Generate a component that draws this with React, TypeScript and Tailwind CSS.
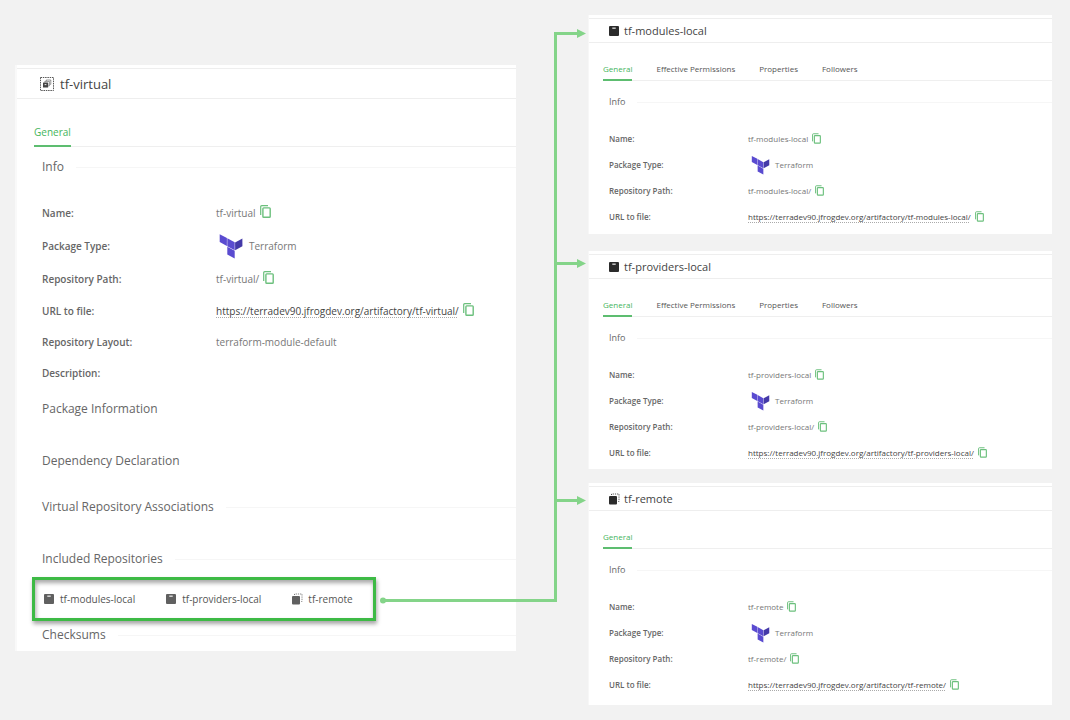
import type { ReactNode } from "react";
import clsx from "clsx";

type RepoKind = "local" | "remote" | "virtual";

type Repo = {
  name: string;
  kind: RepoKind;
  tabs: string[];
  className?: string;
};

const BASE_URL = "https://terradev90.jfrogdev.org/artifactory";

const LOCAL_TABS = ["General", "Effective Permissions", "Properties", "Followers"];

const REPOS: Repo[] = [
  { name: "tf-modules-local", kind: "local", tabs: LOCAL_TABS },
  {
    name: "tf-providers-local",
    kind: "local",
    tabs: LOCAL_TABS,
    className: "mt-[17px] pb-[3px]",
  },
  {
    name: "tf-remote",
    kind: "remote",
    tabs: ["General"],
    className: "mt-[14px] pb-[7px]",
  },
];

function RepoIcon({ kind, className }: { kind: RepoKind; className?: string }) {
  if (kind === "virtual") {
    return (
      <svg viewBox="0 0 14 14" className={className} aria-hidden="true">
        <rect
          x="0.5"
          y="0.5"
          width="13"
          height="13"
          fill="none"
          stroke="currentColor"
          strokeDasharray="1.5 0.8"
          strokeWidth="0.9"
        />
        <path
          d="M6.2 4V3h4.6v4.3H10M4.8 5.4V4.4h4.6v4.4h-1"
          fill="none"
          stroke="currentColor"
          strokeOpacity="0.7"
          strokeWidth="0.8"
        />
        <rect x="3" y="5.6" width="5.2" height="5" rx="0.5" fill="currentColor" />
        <rect x="4.6" y="7.2" width="1.8" height="0.9" fill="#fff" />
      </svg>
    );
  }

  if (kind === "remote") {
    return (
      <svg viewBox="0 0 12 12" className={className} aria-hidden="true">
        <path
          d="M3.5 2V1H11v7.5H9.5"
          fill="none"
          stroke="currentColor"
          strokeDasharray="1.2 1"
          strokeWidth="0.8"
        />
        <rect x="1" y="3" width="8" height="8.5" rx="1" fill="currentColor" />
      </svg>
    );
  }

  return (
    <svg viewBox="0 0 12 12" className={className} aria-hidden="true">
      <rect x="1" y="1" width="10" height="10" rx="1" fill="currentColor" />
      <rect x="4.3" y="2.6" width="3.4" height="1.1" fill="#fff" />
    </svg>
  );
}

function TerraformLogo({ className }: { className?: string }) {
  return (
    <svg viewBox="0 0 24 26" className={className} aria-hidden="true">
      <path d="M0.7 1.2l7.2 3.8v8l-7.2-4z" fill="#5a4bd0" />
      <path d="M8.3 5.3l7.4 4v8l-7.4-4z" fill="#5a4bd0" />
      <path d="M23.4 5.5l-7.3 3.9v7.8l7.3-3.9z" fill="#4439a8" />
      <path d="M8.3 13.8l7.4 4v7.7l-7.4-4z" fill="#5a4bd0" />
    </svg>
  );
}

function CopyButton({ label, large }: { label: string; large?: boolean }) {
  return (
    <button
      type="button"
      aria-label={`Copy ${label}`}
      className="mb-0.5 ml-1 shrink-0 text-[#6cc07d]"
    >
      <svg
        viewBox="0 0 11 13"
        fill="none"
        stroke="currentColor"
        className={large ? "h-[13px] w-[11px]" : "h-[11px] w-[9px]"}
      >
        <path d="M0.7 10V1.7q0-1 1-1H8" strokeWidth="1.2" />
        <rect x="2.9" y="2.9" width="7.3" height="9.3" rx="0.8" strokeWidth="1.4" />
      </svg>
    </button>
  );
}

function Tabs({ tabs, large }: { tabs: string[]; large?: boolean }) {
  return (
    <div
      role="tablist"
      className={clsx(
        "flex items-end border-b border-[#efefef]",
        large ? "ml-[17px] h-12 text-[10px]" : "ml-[14px] h-[38px] gap-6 text-[8px]"
      )}
    >
      {tabs.map((tab, index) => (
        <button
          key={tab}
          type="button"
          role="tab"
          aria-selected={index === 0}
          className={clsx(
            "-mb-px border-b-2",
            large ? "pb-[5px] leading-4" : "pb-1 leading-3",
            index === 0
              ? "border-[#5dbd70] text-[#45b55c]"
              : "border-transparent text-[#555]"
          )}
        >
          {tab}
        </button>
      ))}
    </div>
  );
}

function SectionTitle({
  children,
  large,
  rule = true,
}: {
  children: ReactNode;
  large?: boolean;
  rule?: boolean;
}) {
  return (
    <div className="flex items-center gap-3">
      <h3
        className={clsx(
          "shrink-0 text-[#666]",
          large ? "text-[12px] leading-4" : "text-[9px] leading-3"
        )}
      >
        {children}
      </h3>
      {rule && <div className="h-px flex-1 bg-[#f6f6f6]" />}
    </div>
  );
}

function Field({
  label,
  children,
  large,
  className,
}: {
  label: string;
  children?: ReactNode;
  large?: boolean;
  className: string;
}) {
  return (
    <div className={clsx("flex items-center", className)}>
      <dt
        className={clsx(
          "shrink-0 font-semibold text-[#666]",
          large ? "w-[174px]" : "w-[139px]"
        )}
      >
        {label}:
      </dt>
      <dd className="flex items-center text-[#777]">{children}</dd>
    </div>
  );
}

function RepoFields({ name, large }: { name: string; large?: boolean }) {
  const row = large ? "h-[33px]" : "h-[26px]";
  const url = `${BASE_URL}/${name}/`;

  return (
    <>
      <Field label="Name" large={large} className={row}>
        {name}
        <CopyButton label="name" large={large} />
      </Field>
      <Field label="Package Type" large={large} className={row}>
        <TerraformLogo
          className={
            large ? "ml-[3px] mr-1.5 h-[26px] w-6" : "ml-[3px] mr-[5px] h-5 w-[19px]"
          }
        />
        Terraform
      </Field>
      <Field label="Repository Path" large={large} className={row}>
        {name}/
        <CopyButton label="repository path" large={large} />
      </Field>
      <Field
        label="URL to file"
        large={large}
        className={large ? "h-[31px]" : row}
      >
        <a
          href={url}
          className="text-[#444] underline decoration-[#aaa] decoration-dotted underline-offset-2"
        >
          {url}
        </a>
        <CopyButton label="URL" large={large} />
      </Field>
    </>
  );
}

function RepoCard({ name, kind, tabs, className = "pb-1" }: Repo) {
  return (
    <section
      className={clsx("border-l border-[#f7f7f7] bg-white pt-[3px]", className)}
    >
      <header className="flex h-[25px] items-center gap-1 border-y border-[#eee] pl-[19px]">
        <RepoIcon kind={kind} className="h-3 w-3 text-[#2b2b2b]" />
        <h2 className="text-[11px] leading-4 text-[#444]">{name}</h2>
      </header>
      <Tabs tabs={tabs} />
      <div className="pl-5">
        <div className="pt-[15px] pb-[18px]">
          <SectionTitle>Info</SectionTitle>
        </div>
        <dl className="text-[8px] leading-3">
          <RepoFields name={name} />
        </dl>
      </div>
    </section>
  );
}

function VirtualRepoCard() {
  return (
    <section className="border-l-2 border-[#f9f9f9] bg-white pt-[3px] pb-2">
      <header className="flex h-[31px] items-center gap-1.5 border-y border-[#eee] pl-[23px]">
        <RepoIcon kind="virtual" className="h-[14px] w-[14px] text-[#444]" />
        <h2 className="text-[13px] leading-5 text-[#444]">tf-virtual</h2>
      </header>
      <Tabs tabs={["General"]} large />
      <div className="pl-[25px]">
        <div className="pt-3 pb-[21px]">
          <SectionTitle large>Info</SectionTitle>
        </div>
        <dl className="text-[10px] leading-4">
          <RepoFields name="tf-virtual" large />
          <Field label="Repository Layout" large className="h-[31px]">
            terraform-module-default
          </Field>
          <Field label="Description" large className="h-[31px]" />
        </dl>
        <div className="flex flex-col gap-9 pt-[13px]">
          <SectionTitle large rule={false}>
            Package Information
          </SectionTitle>
          <SectionTitle large rule={false}>
            Dependency Declaration
          </SectionTitle>
        </div>
        <div className="flex flex-col gap-9 pt-[30px]">
          <SectionTitle large>Virtual Repository Associations</SectionTitle>
          <SectionTitle large>Included Repositories</SectionTitle>
        </div>
      </div>
      <ul className="mt-[10px] ml-[15px] flex h-11 w-[344px] items-center gap-[30px] border-[3px] border-[#3dba45] pl-2 text-[10px] leading-4 text-[#555] shadow-[1px_3px_4px_rgba(0,0,0,0.35),inset_1px_3px_4px_rgba(0,0,0,0.35)]">
        {REPOS.map((repo) => (
          <li key={repo.name} className="flex items-center gap-[5px]">
            <RepoIcon kind={repo.kind} className="h-3 w-3 text-[#606060]" />
            {repo.name}
          </li>
        ))}
      </ul>
      <div className="pt-1.5 pl-[25px]">
        <SectionTitle large>Checksums</SectionTitle>
      </div>
    </section>
  );
}

// Runs from the included repositories box to the header of each card
function Connector() {
  return (
    <svg
      viewBox="0 0 208 580"
      className="absolute top-[13px] right-px h-[580px] w-[208px] text-[#84d489]"
      aria-hidden="true"
    >
      <path
        d="M4 572.5H176.5V5.5H199M176 235.5H199M176 472.5H199"
        fill="none"
        stroke="currentColor"
        strokeWidth="3"
      />
      <g fill="currentColor">
        <circle cx="4" cy="572.5" r="3" />
        <path d="M198 1l9 4.500-9 4.500z" />
        <path d="M198 231l9 4.500-9 4.500z" />
        <path d="M198 468l9 4.500-9 4.500z" />
      </g>
    </svg>
  );
}

export default function App() {
  return (
    <main className="grid min-h-screen grid-cols-[501fr_72px_464fr] bg-[#f2f2f2] pt-[15px] pr-[18px] pb-[15px] pl-[15px] font-['Open_Sans',sans-serif]">
      <div className="pt-[50px]">
        <VirtualRepoCard />
      </div>
      <div className="relative">
        <Connector />
      </div>
      <div>
        {REPOS.map((repo) => (
          <RepoCard key={repo.name} {...repo} />
        ))}
      </div>
    </main>
  );
}
